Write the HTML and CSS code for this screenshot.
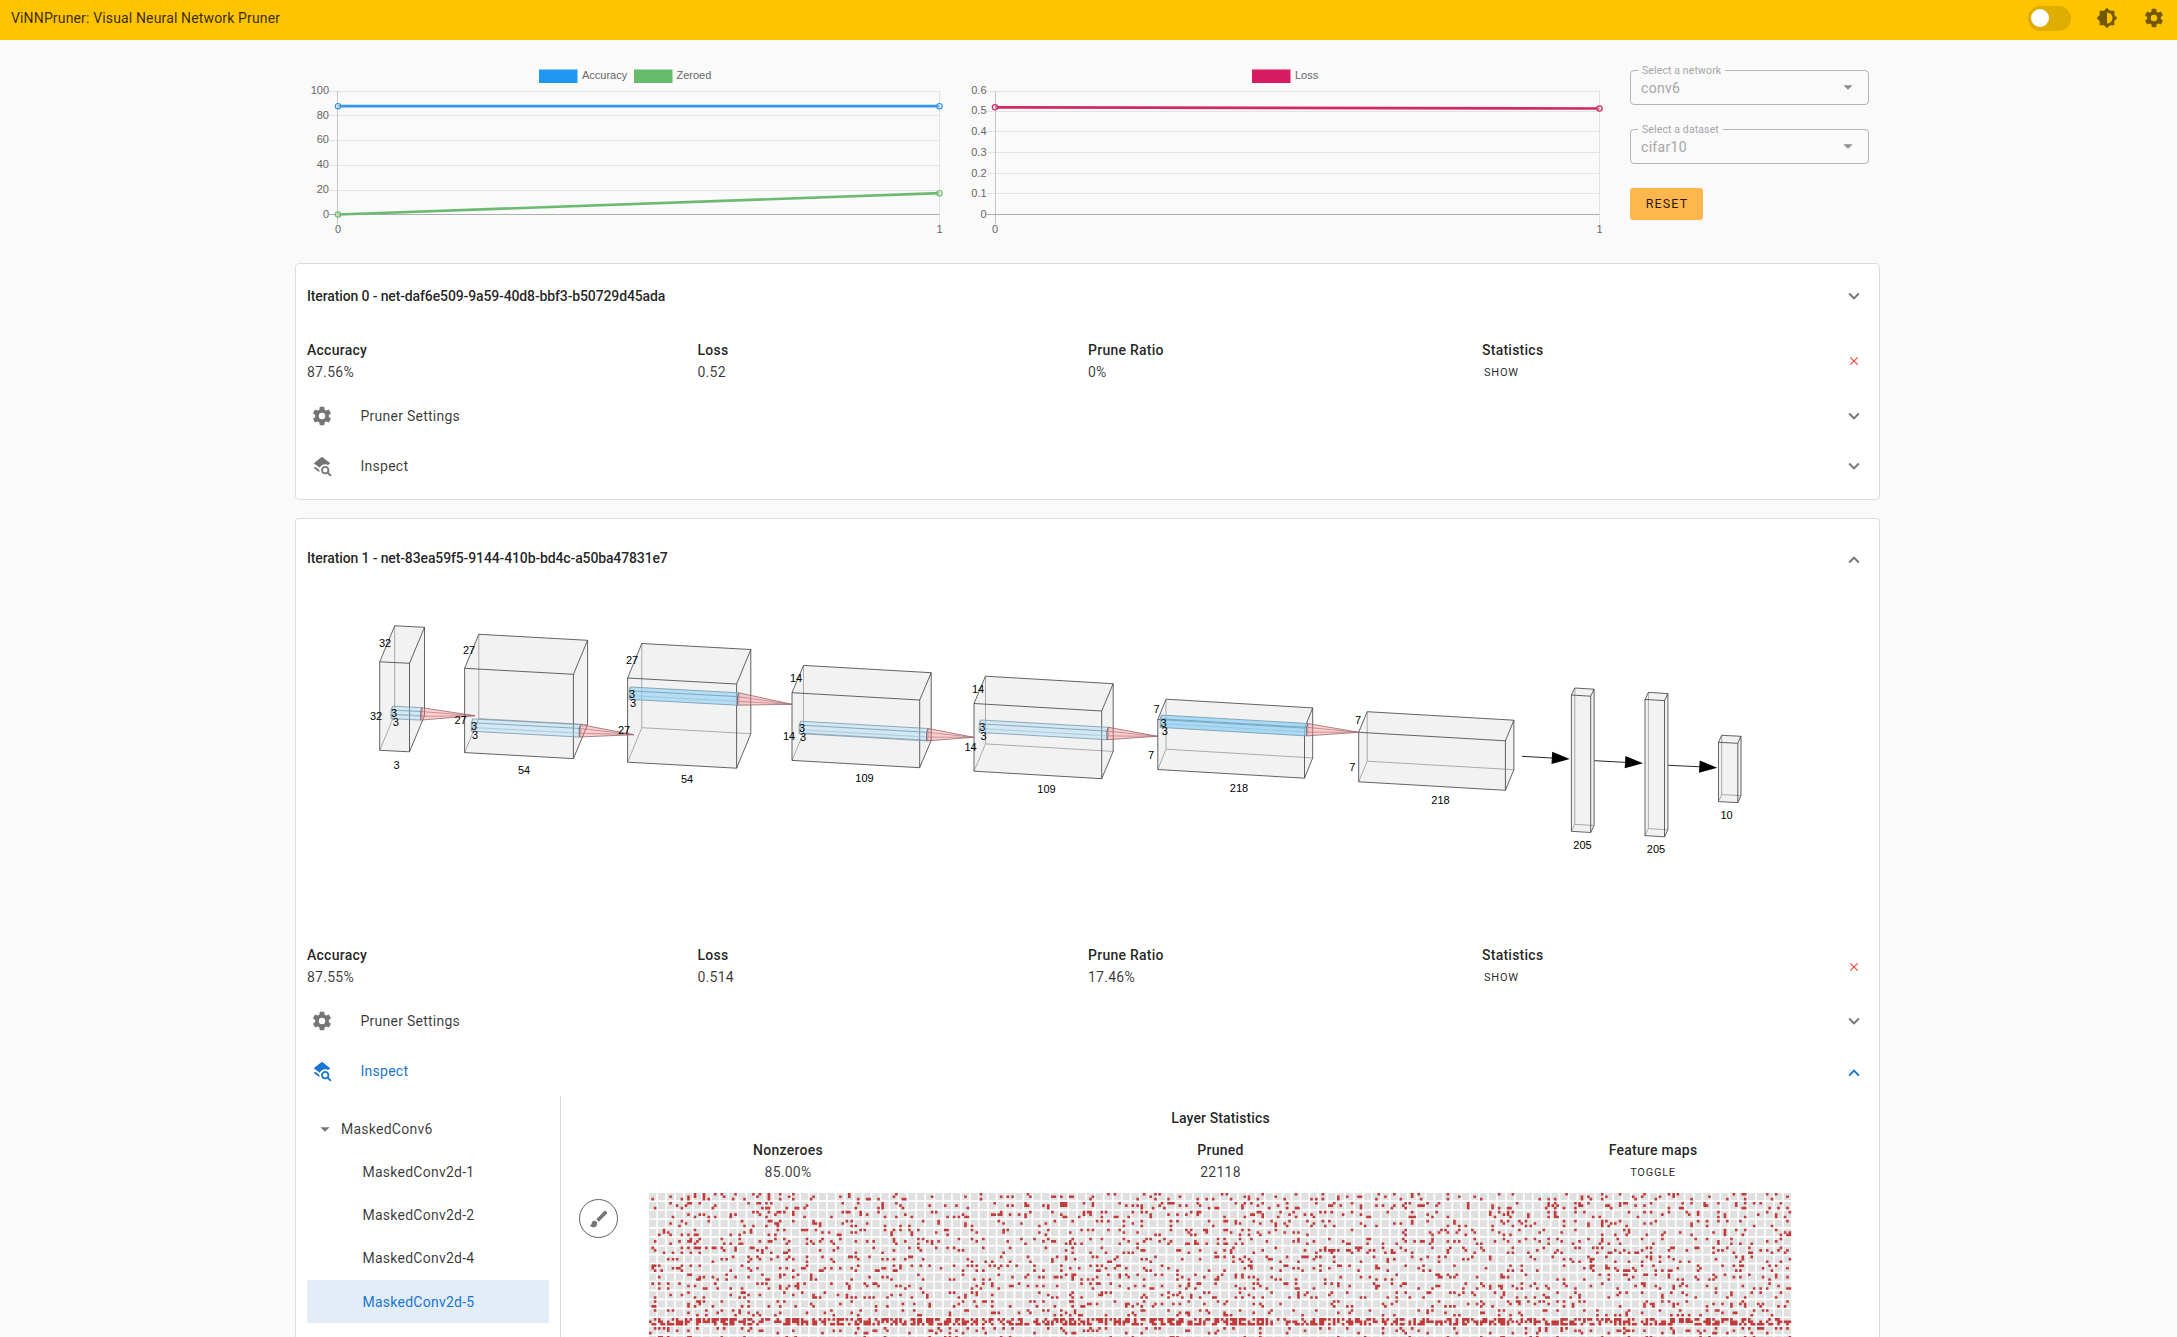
FILE: index.html
```html
<!DOCTYPE html>
<html lang="en">
<head>
<meta charset="utf-8">
<title>ViNNPruner</title>
<link rel="stylesheet" href="styles.css">
</head>
<body>
<svg class="defs" width="0" height="0" aria-hidden="true">
  <symbol id="cog" viewBox="0 0 24 24"><path d="M12,15.5A3.5,3.5 0 0,1 8.5,12A3.5,3.5 0 0,1 12,8.5A3.5,3.5 0 0,1 15.5,12A3.5,3.5 0 0,1 12,15.5M19.43,12.97C19.47,12.65 19.5,12.33 19.5,12C19.5,11.67 19.47,11.34 19.43,11L21.54,9.37C21.73,9.22 21.78,8.95 21.66,8.73L19.66,5.27C19.54,5.05 19.27,4.96 19.05,5.05L16.56,6.05C16.04,5.66 15.5,5.32 14.87,5.07L14.5,2.42C14.46,2.18 14.25,2 14,2H10C9.75,2 9.54,2.18 9.5,2.42L9.13,5.07C8.5,5.32 7.96,5.66 7.44,6.05L4.95,5.05C4.73,4.96 4.46,5.05 4.34,5.27L2.34,8.73C2.21,8.95 2.27,9.22 2.46,9.37L4.57,11C4.53,11.34 4.5,11.67 4.5,12C4.5,12.33 4.53,12.65 4.57,12.97L2.46,14.63C2.27,14.78 2.21,15.05 2.34,15.27L4.34,18.73C4.46,18.95 4.73,19.03 4.95,18.95L7.44,17.94C7.96,18.34 8.5,18.68 9.13,18.93L9.5,21.58C9.54,21.82 9.75,22 10,22H14C14.25,22 14.46,21.82 14.5,21.58L14.87,18.93C15.5,18.67 16.04,18.34 16.56,17.94L19.05,18.95C19.27,19.03 19.54,18.95 19.66,18.73L21.66,15.27C21.78,15.05 21.73,14.78 21.54,14.63L19.43,12.97Z"/></symbol>
  <symbol id="brightness" viewBox="0 0 24 24"><path d="M12,18V6A6,6 0 0,1 18,12A6,6 0 0,1 12,18M20,15.31L23.31,12L20,8.69V4H15.31L12,0.69L8.69,4H4V8.69L0.69,12L4,15.31V20H8.69L12,23.31L15.31,20H20V15.31Z"/></symbol>
  <symbol id="layers-search" viewBox="0 0 24 24"><path d="M19.31 18.9C19.75 18.21 20 17.38 20 16.5C20 14 18 12 15.5 12S11 14 11 16.5 13 21 15.5 21C16.37 21 17.19 20.75 17.88 20.32L21 23.39L22.39 22L19.31 18.9M15.5 19C14.12 19 13 17.88 13 16.5S14.12 14 15.5 14 18 15.12 18 16.5 16.88 19 15.5 19M9.59 19.2L3 14.07L4.62 12.81L9 16.22C9 16.32 9 16.41 9 16.5C9 17.46 9.22 18.38 9.59 19.2M9.5 14.04L3 9L12 2L21 9L18.66 10.82C17.72 10.3 16.64 10 15.5 10C12.79 10 10.47 11.67 9.5 14.04Z"/></symbol>
  <symbol id="chevron" viewBox="0 0 24 24"><path d="M7.41,8.58L12,13.17L16.59,8.58L18,10L12,16L6,10L7.41,8.58Z"/></symbol>
  <symbol id="close" viewBox="0 0 24 24"><path d="M19,6.41L17.59,5L12,10.59L6.41,5L5,6.41L10.59,12L5,17.59L6.41,19L12,13.41L17.59,19L19,17.59L13.41,12L19,6.41Z"/></symbol>
  <symbol id="menu-down" viewBox="0 0 24 24"><path d="M7,10L12,15L17,10H7Z"/></symbol>
  <symbol id="brush" viewBox="0 0 24 24"><path d="M20.71,4.63L19.37,3.29C19,2.9 18.35,2.9 17.96,3.29L9,12.25L11.75,15L20.71,6.04C21.1,5.65 21.1,5 20.71,4.63M7,14A3,3 0 0,0 4,17C4,18.31 2.84,19 2,19C2.92,20.22 4.5,21 6,21A4,4 0 0,0 10,17A3,3 0 0,0 7,14Z"/></symbol>
</svg>

<header class="appbar">
  <span class="appbar-title">ViNNPruner: Visual Neural Network Pruner</span>
  <span class="switch"><span class="thumb"></span></span>
  <svg class="icon bar-icon"><use href="#brightness"/></svg>
  <svg class="icon bar-icon"><use href="#cog"/></svg>
</header>

<main class="content">
  <section class="overview">
    <svg class="chart" width="655" height="223" viewBox="295 40 655 223" id="chart-acc">
      <g class="grid"><path d="M329 91.5H939.5M329 115.5H939.5M329 140.5H939.5M329 165.5H939.5M329 190.5H939.5M939.5 91V224"/></g>
      <path class="axis" d="M337.5 91V224"/><path class="axis zero" d="M329 214.5H939.5"/>
      <rect x="539" y="69.500" width="38.500" height="13.500" fill="#2196f3"/><text x="582" y="79">Accuracy</text>
      <rect x="634" y="69.500" width="38.500" height="13.500" fill="#66bb6a"/><text x="676.500" y="79">Zeroed</text>
      <g class="end"><text x="329" y="93.500">100</text><text x="329" y="118.500">80</text><text x="329" y="143">60</text><text x="329" y="168">40</text><text x="329" y="193">20</text><text x="329" y="217.500">0</text></g>
      <g class="mid"><text x="338" y="233">0</text><text x="939.500" y="233">1</text></g>
      <g class="blue"><path d="M338 106.200H939.500"/><circle cx="338" cy="106.200" r="2.700"/><circle cx="939.500" cy="106.200" r="2.700"/></g>
      <g class="green"><path d="M338 214.500L939.500 193.200"/><circle cx="338" cy="214.500" r="2.700"/><circle cx="939.500" cy="193.200" r="2.700"/></g>
    </svg>
    <svg class="chart" width="680" height="223" viewBox="950 40 680 223" id="chart-loss">
      <g class="grid"><path d="M986.500 91.500H1599.500M986.500 111.500H1599.500M986.500 131.500H1599.500M986.500 152.500H1599.500M986.500 173.500H1599.500M986.500 193.500H1599.500M1599.500 91V224"/></g>
      <path class="axis" d="M995.500 91V224"/><path class="axis zero" d="M986.500 214.500H1599.500"/>
      <rect x="1252" y="69.500" width="38.500" height="13.500" fill="#d81b60"/><text x="1295" y="79">Loss</text>
      <g class="end"><text x="986.500" y="93.500">0.6</text><text x="986.500" y="114">0.5</text><text x="986.500" y="135">0.4</text><text x="986.500" y="155.500">0.3</text><text x="986.500" y="176.500">0.2</text><text x="986.500" y="197">0.1</text><text x="986.500" y="217.500">0</text></g>
      <g class="mid"><text x="995" y="233">0</text><text x="1599.500" y="233">1</text></g>
      <g class="pink"><path d="M995 107.300L1599.500 108.500"/><circle cx="995" cy="107.300" r="2.700"/><circle cx="1599.500" cy="108.500" r="2.700"/></g>
    </svg>
    <form class="controls">
      <fieldset class="select"><legend>Select a network</legend><span>conv6</span><svg class="icon"><use href="#menu-down"/></svg></fieldset>
      <fieldset class="select"><legend>Select a dataset</legend><span>cifar10</span><svg class="icon"><use href="#menu-down"/></svg></fieldset>
      <button type="button" class="reset">RESET</button>
    </form>
  </section>

  <article class="card first">
    <div class="card-head"><h2>Iteration 0 - net-daf6e509-9a59-40d8-bbf3-b50729d45ada</h2><svg class="icon"><use href="#chevron"/></svg></div>
    <div class="metrics">
      <div><b>Accuracy</b><span>87.56%</span></div><div><b>Loss</b><span>0.52</span></div><div><b>Prune Ratio</b><span>0%</span></div><div><b>Statistics</b><span class="btn">SHOW</span></div>
      <svg class="icon close"><use href="#close"/></svg>
    </div>
    <div class="row"><svg class="icon lead"><use href="#cog"/></svg><span>Pruner Settings</span><svg class="icon"><use href="#chevron"/></svg></div>
    <div class="row"><svg class="icon lead"><use href="#layers-search"/></svg><span>Inspect</span><svg class="icon"><use href="#chevron"/></svg></div>
  </article>

  <article class="card second">
    <div class="card-head"><h2>Iteration 1 - net-83ea59f5-9144-410b-bd4c-a50ba47831e7</h2><svg class="icon up"><use href="#chevron"/></svg></div>
    <svg class="network" id="network" width="1583" height="343" viewBox="296 595 1583 343"></svg>
    <div class="metrics">
      <div><b>Accuracy</b><span>87.55%</span></div><div><b>Loss</b><span>0.514</span></div><div><b>Prune Ratio</b><span>17.46%</span></div><div><b>Statistics</b><span class="btn">SHOW</span></div>
      <svg class="icon close"><use href="#close"/></svg>
    </div>
    <div class="row"><svg class="icon lead"><use href="#cog"/></svg><span>Pruner Settings</span><svg class="icon"><use href="#chevron"/></svg></div>
    <div class="row active"><svg class="icon lead"><use href="#layers-search"/></svg><span>Inspect</span><svg class="icon up"><use href="#chevron"/></svg></div>
    <div class="inspect">
      <nav class="tree">
        <div class="node root"><svg class="icon"><use href="#menu-down"/></svg>MaskedConv6</div>
        <div class="node">MaskedConv2d-1</div>
        <div class="node">MaskedConv2d-2</div>
        <div class="node">MaskedConv2d-4</div>
        <div class="node selected">MaskedConv2d-5</div>
      </nav>
      <div class="layer">
        <div class="tools"><button type="button" class="brush"><svg class="icon"><use href="#brush"/></svg></button></div>
        <div class="stats">
          <h3>Layer Statistics</h3>
          <div class="stats-row">
            <div><b>Nonzeroes</b><span>85.00%</span></div><div><b>Pruned</b><span>22118</span></div><div><b>Feature maps</b><span class="btn">TOGGLE</span></div>
          </div>
          <svg class="weights" id="weights" width="1143" height="145"></svg>
        </div>
      </div>
    </div>
  </article>
</main>
<script src="draw.js"></script>
</body>
</html>
```
FILE: styles.css
```css
* { box-sizing: border-box; }
html, body { height: 100%; }
body {
  display: flex;
  flex-direction: column;
  margin: 0;
  overflow: hidden;
  background: #fafafa;
  color: rgba(0, 0, 0, .87);
  font: 400 14px/22px Roboto, "Liberation Sans", sans-serif;
  letter-spacing: .25px;
}
.defs { position: absolute; }
.icon { display: block; flex: none; width: 22px; height: 22px; fill: #757575; }
.icon.up { transform: rotate(180deg); }

.appbar { flex: none; display: flex; align-items: center; height: 40px; padding: 0 12px 4px 11px; background: #ffc400; }
.appbar-title { flex: 1; letter-spacing: .15px; color: rgba(0, 0, 0, .8); }
.switch { display: flex; align-items: center; width: 43px; height: 25px; margin-right: 25px; padding-left: 3px; border-radius: 12.5px; background: #dfac00; }
.thumb { width: 18px; height: 18px; border-radius: 50%; background: #fff; }
.bar-icon { fill: #735800; }
.bar-icon + .bar-icon { margin-left: 25px; }

.content { display: flex; flex-direction: column; flex: 1; min-height: 0; width: 1585px; margin-left: 295px; }
.overview { flex: none; display: flex; height: 223px; }
.chart { flex: none; font: 11px "Liberation Sans", Arial, sans-serif; letter-spacing: 0; }
.chart text { fill: #666; }
.chart .end { text-anchor: end; }
.chart .mid { text-anchor: middle; }
.grid { fill: none; stroke: #e3e3e3; }
.axis { fill: none; stroke: #c4c4c4; }
.axis.zero { stroke: #adadad; }
.blue, .green, .pink { fill: #eee; stroke-width: 2.7; }
.blue { stroke: #3496ea; }
.green { stroke: #6cba70; }
.pink { stroke: #d12a67; }
.chart circle { stroke-width: 1.2; fill-opacity: .4; }

.controls { width: 239px; padding-top: 23px; }
.select {
  display: flex; align-items: center; justify-content: space-between;
  height: 42px; margin: 0 0 17px; padding: 0 9px 6px 10px;
  min-width: 0;
  border: 1px solid #b4b4b4; border-radius: 4px;
  color: #a6a6a6;
}
.select legend { height: 14px; margin-left: -3px; padding: 0 4px; font-size: 10.5px; line-height: 15px; letter-spacing: .12px; }
.select span { letter-spacing: .3px; }
.select .icon { margin-top: -2px; fill: #8f8f8f; }
.reset {
  width: 73px; height: 32px; margin-top: 7px; padding: 0 0 1px 1px;
  border: 0; border-radius: 3px;
  background: #ffb74d; color: rgba(0, 0, 0, .87);
  font: 400 12.5px Roboto, sans-serif; letter-spacing: 1.15px;
}

.card { flex: none; border: 1px solid #dedede; border-radius: 4px; background: #fff; }
.card.first { height: 237px; margin-bottom: 18px; }
.card.second { flex: 1; min-height: 0; overflow: hidden; border-bottom: 0; border-radius: 4px 4px 0 0; }
.card-head, .row { display: flex; align-items: center; justify-content: space-between; padding: 0 14px 0 11px; }
.card-head { height: 64px; }
.second .card-head { height: 76px; padding-top: 1px; }
.second .card-head .icon { margin-top: 5px; }
h2, h3 { margin: 0; font-size: 14px; font-weight: 500; }
h2 { letter-spacing: -.13px; }
h3 { letter-spacing: .12px; }
b { font-weight: 500; }
.metrics { display: grid; grid-template-columns: 390.5px 390.5px 394px 1fr auto; padding: 11px 18px 0 11px; height: 63px; }
.metrics > div, .stats-row > div { display: flex; flex-direction: column; }
.metrics span, .row span, .node, .stats-row span { color: rgba(0, 0, 0, .78); }
.metrics .close { width: 14px; height: 14px; margin-top: 15px; fill: #f44336; }
.metrics .btn, .stats-row .btn { padding: 1px 0 0 2px; font-size: 11px; letter-spacing: .75px; color: rgba(0, 0, 0, .87); }
.stats-row .btn { padding-left: 0; }
.network { display: block; }
.network text { fill: #000; font: 11px "Liberation Sans", Arial, sans-serif; letter-spacing: 0; text-anchor: middle; }
.second .metrics { padding-top: 6px; height: 58px; }
.second .metrics .close { margin-top: 16px; }
.row { height: 50px; }
.row .lead { margin-left: 3.5px; }
.row span { flex: 1; margin-left: 28px; }
.row.active span, .node.selected { color: #1976d2; }
.row.active .icon { fill: #1976d2; }
.row.active .up { margin-top: 3px; }

.inspect { display: flex; height: 241px; }
.tree { width: 265px; padding: 11px 11px 0; border-right: 1px solid #dedede; }
.node { display: flex; align-items: center; height: 43px; padding-left: 55.5px; }
.node.root { padding-left: 7px; }
.node.root .icon { margin-right: 5px; }
.node.selected { margin-top: 1px; background: #e3edf8; color: #1976d2; }
.layer { display: flex; flex: 1; }
.tools { width: 88px; padding: 103px 0 0 18px; }
.brush { display: flex; align-items: center; justify-content: center; width: 39px; height: 39px; padding: 0; border: 1px solid #616161; border-radius: 50%; background: none; }
.stats { width: 1143px; padding-top: 11px; text-align: center; }
.stats-row { display: grid; grid-template-columns: 277px 588px 277px; justify-content: center; margin-top: 10px; }
.weights { display: block; margin-top: 9px; }
```
FILE: draw.js
```js
// Network diagram: each layer is [front corner x, y, width dx, width dy, height, depth dx, depth dy].
const boxes = [
  [379.7, 661.8, 29.8, 1.5, 88.5, 15, -36],
  [464.6, 668.3, 108.8, 6, 84.3, 14.2, -34],
  [627.6, 678, 109, 6, 84.2, 14.2, -34.5],
  [792, 692.7, 127.7, 7.3, 67.7, 11.5, -27.3],
  [974, 703.5, 127.7, 7.5, 67.7, 11.5, -27.3],
  [1157.8, 719.5, 146.7, 8.7, 50, 8.2, -20.3],
  [1358.7, 732.3, 146.7, 8.5, 49.5, 8.5, -20.6],
  [1571.4, 695, 19.3, 1.2, 136.3, 3.4, -7],
  [1645, 699.4, 19.5, 1.2, 136.2, 3.4, -7],
  [1718.5, 742.3, 19.3, 1, 59.3, 3.2, -7]
];
// Convolution kernels: [x, y, width dx, width dy, apex x, apex y, opacity].
const kernels = [
  [391.1, 710, 29.5, 1.5, 475, 715.7, .3],
  [471.3, 722.7, 108, 5.7, 634, 734.7, .3],
  [629, 690.8, 108.5, 5.8, 792, 704.3, .6],
  [799.2, 725, 127.5, 7.3, 974, 737.3, .3],
  [979.2, 723.8, 127.8, 7.3, 1157.7, 736.3, .3],
  [1160.2, 718.8, 146.3, 8.5, 1358.7, 732.3, .7]
];
const labels = [
  ['32', 385, 643], ['32', 376, 716.5], ['3', 394, 713.3], ['3', 395.7, 722], ['3', 396.6, 765.2],
  ['27', 469, 650.3], ['27', 460.5, 720.3], ['3', 474, 726.3], ['3', 475, 735.2], ['54', 524, 769.7],
  ['27', 632, 660.3], ['27', 624, 729.8], ['3', 632, 694], ['3', 633, 702.7], ['54', 687, 779.2],
  ['14', 796, 678.3], ['14', 789, 736], ['3', 802, 727.7], ['3', 803, 736.7], ['109', 864.5, 778.2],
  ['14', 978, 689.3], ['14', 970.5, 747], ['3', 982.3, 727.3], ['3', 983.5, 736], ['109', 1046.5, 789.2],
  ['7', 1156.5, 708.8], ['7', 1151, 754.7], ['3', 1163.5, 722.7], ['3', 1164.7, 731], ['218', 1239, 788.2],
  ['7', 1358, 720.5], ['7', 1352.3, 766.7], ['218', 1440.5, 800.2],
  ['205', 1582.5, 845], ['205', 1656, 849.5], ['10', 1726.5, 815.5]
];
const arrows = [[1522, 756.3, 1569.8, 759], [1594.7, 760.7, 1643, 763.3], [1668.3, 765.3, 1717.3, 767.7]];

function prism([x, y, wx, wy, h, dx, dy], stroke, back, fill, fo) {
  const p = (a, b, c) => (x + a * wx + c * dx).toFixed(1) + ' ' + (y + a * wy + b * h + c * dy).toFixed(1);
  const outline = `M${p(0,0,0)}L${p(0,0,1)}L${p(1,0,1)}L${p(1,1,1)}L${p(1,1,0)}L${p(0,1,0)}Z`;
  return `<path d="${outline}" fill="${fill}" fill-opacity="${fo}" stroke="none"/>` +
    `<path d="M${p(0,0,1)}L${p(0,1,1)}L${p(1,1,1)}M${p(0,1,1)}L${p(0,1,0)}" fill="none" stroke="${back}" stroke-width=".7"/>` +
    `<path d="${outline}M${p(0,0,0)}L${p(1,0,0)}L${p(1,0,1)}M${p(1,0,0)}L${p(1,1,0)}" fill="none" stroke="${stroke}" stroke-width=".8"/>`;
}

let net = boxes.map(b => prism(b, '#3c3c3c', '#8c8c8c', '#f2f2f2', 1)).join('');
for (const [x, y, wx, wy, ax, ay, o] of kernels) {
  net += prism([x, y, wx, wy, 8.6, 1.3, -3.8], '#7797a8', '#9cbccd', '#88d0f8', o);
  const rx = x + wx, ry = y + wy;
  net += `<path d="M${rx} ${ry}L${rx + 1.3} ${ry - 3.8}L${ax} ${ay}L${rx} ${ry + 8.6}Z" fill="#ff8080" fill-opacity=".38" stroke="#85585b" stroke-width=".7"/>` +
    `<path d="M${rx} ${ry}L${ax} ${ay}L${rx + 1.3} ${ry + 4.8}" fill="none" stroke="#a06a6c" stroke-width=".6"/>`;
}
for (const [x1, y1, x2, y2] of arrows) {
  net += `<path d="M${x1} ${y1}L${x2 - 15} ${y2 - .8}" stroke="#111" stroke-width=".9"/>` +
    `<path d="M${x2} ${y2}L${x2 - 17.6} ${y2 - 7.2}L${x2 - 18.3} ${y2 + 5}Z"/>`;
}
net += labels.map(([t, x, y]) => `<text x="${x}" y="${y + 3.8}">${t}</text>`).join('');
document.getElementById('network').innerHTML = net;

// Weight mask: 3x3 kernels, pruned weights in red; one output channel is mostly pruned.
const pitch = 8.935, sub = 2.42, dot = 2.6, cols = 128, rows = 17, denseRow = 14;
let seed = 20117;
const random = () => {
  seed = (seed + 0x6D2B79F5) | 0;
  let t = Math.imul(seed ^ (seed >>> 15), 1 | seed);
  t = (t + Math.imul(t ^ (t >>> 7), 61 | t)) ^ t;
  return ((t ^ (t >>> 14)) >>> 0) / 4294967296;
};
let cells = '', pruned = '';
for (let r = 0; r < rows; r++) {
  for (let c = 0; c < cols; c++) {
    const x = c * pitch, y = r * pitch;
    cells += `M${x.toFixed(2)} ${y.toFixed(2)}h7.26v7.26h-7.26z`;
    for (let k = 0; k < 9; k++) {
      if (random() < (r === denseRow ? .56 : .125)) {
        pruned += `M${(x + (k % 3) * sub).toFixed(2)} ${(y + Math.floor(k / 3) * sub).toFixed(2)}h${dot}v${dot}h-${dot}z`;
      }
    }
  }
}
document.getElementById('weights').innerHTML = `<path d="${cells}" fill="#e0e0e0"/><path d="${pruned}" fill="#c23b3b"/>`;
```
